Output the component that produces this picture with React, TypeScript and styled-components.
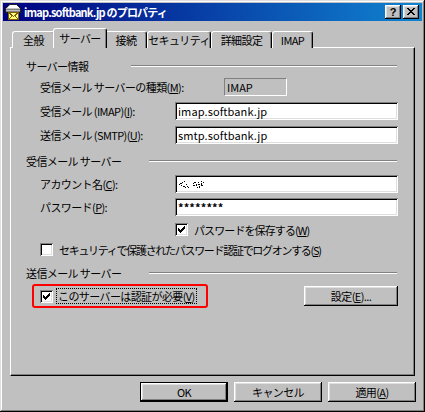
import React, { FC } from 'react';
import styled, { createGlobalStyle } from 'styled-components';

const GlobalStyle = createGlobalStyle`
  html, body {
    margin: 0;
    padding: 0;
    background: #c0c0c0;
  }
  body {
    font-family: "Noto Sans CJK JP", "Liberation Sans", sans-serif;
    font-size: 11px;
    letter-spacing: -0.6px;
    color: #000;
  }
`;

const raised = `
  box-shadow: inset -1px -1px #000, inset 1px 1px #fff,
    inset -2px -2px #808080, inset 2px 2px #dfdfdf;
`;

const sunken = `
  box-shadow: inset 1px 1px #808080, inset -1px -1px #fff,
    inset 2px 2px #000, inset -2px -2px #dfdfdf;
`;

const tabs = [
  { label: '全般', w: 43 },
  { label: 'サーバー', w: 54, active: true },
  { label: '接続', w: 42 },
  { label: 'セキュリティ', w: 64 },
  { label: '詳細設定', w: 61 },
  { label: 'IMAP', w: 41 },
];

const MailIcon: FC = () => (
  <svg width="16" height="16" viewBox="0 0 16 16" shapeRendering="crispEdges">
    <path d="M4.5 0.5h7l4 4v4h-15v-4z" fill="#c0c0c0" stroke="#202020" />
    <path d="M5 1h6l3 3H2z" fill="#ffffff" />
    <rect x="1" y="5" width="14" height="1" fill="#808080" />
    <rect x="1" y="7" width="14" height="1" fill="#808080" />
    <rect x="3.5" y="8.5" width="10" height="7" fill="#ffff80" stroke="#806000" />
    <path d="M3.5 8.5l5 4 5-4M3.5 15.5l3.5-3.5M13.5 15.5l-3.5-3.5" fill="none" stroke="#806000" />
  </svg>
);

const CloseGlyph: FC = () => (
  <svg width="8" height="7" viewBox="0 0 8 7" shapeRendering="crispEdges">
    <path d="M0 0h2v1h1v1h2V1h1V0h2v1H7v1H6v1H5v1h1v1h1v1h1v1H6V6H5V5H3v1H2v1H0V6h1V5h1V4h1V3H2V2H1V1H0z" fill="#000" />
  </svg>
);

const CheckGlyph: FC = () => (
  <svg width="7" height="7" viewBox="0 0 7 7" shapeRendering="crispEdges">
    <path d="M6 0h1v3H6v1H5v1H4v1H3v1H2V6H1V5H0V2h1v1h1v1h1V3h1V2h1V1h1z" fill="#000" />
  </svg>
);

const Check: FC<{ checked?: boolean }> = ({ checked }) => (
  <CheckBox>{checked && <CheckGlyph />}</CheckBox>
);

const App: FC = () => {
  return (
    <>
      <GlobalStyle />
      <Window>
        <TitleBar>
          <MailIcon />
          <Title>imap.softbank.jp のプロパティ</Title>
          <TitleButtons>
            <TitleButton>?</TitleButton>
            <TitleButton>
              <CloseGlyph />
            </TitleButton>
          </TitleButtons>
        </TitleBar>

        <TabStrip>
          {tabs.map((t) => (
            <Tab key={t.label} $w={t.w} $active={t.active}>
              {t.label}
            </Tab>
          ))}
        </TabStrip>

        <Panel>
          <GroupHeader $labelWidth={105} $mt={0}>
            <span>サーバー情報</span>
            <Etch />
          </GroupHeader>
          <FieldRow $mt={5}>
            <span>
              受信メール サーバーの種類(<u>M</u>):
            </span>
            <StaticField>IMAP</StaticField>
          </FieldRow>
          <FieldRow $mt={6}>
            <span>
              受信メール (IMAP)(<u>I</u>):
            </span>
            <TextBox>imap.softbank.jp</TextBox>
          </FieldRow>
          <FieldRow $mt={6}>
            <span>
              送信メール (SMTP)(<u>U</u>):
            </span>
            <TextBox>smtp.softbank.jp</TextBox>
          </FieldRow>

          <GroupHeader $labelWidth={123} $mt={10}>
            <span>受信メール サーバー</span>
            <Etch />
          </GroupHeader>
          <FieldRow $mt={7}>
            <span>
              アカウント名(<u>C</u>):
            </span>
            <TextBox>
              {/* 伏せ字にしたアカウント名 */}
              <svg width="30" height="11" viewBox="0 0 30 11" shapeRendering="crispEdges">
                <path
                  d="M1 5h1v1H1zM2 4h2v1H2zM3 6h1v1H3zM4 3h1v1H4zM6 2h1v1H6zM5 7h2v1H5zM8 5h1v1H8zM7 8h1v1H7zM9 7h1v1H9zM10 8h1v1h-1zM15 4h1v1h-1zM16 3h2v1h-2zM15 6h2v1h-2zM18 5h1v2h-1zM20 3h1v1h-1zM20 5h2v1h-2zM21 7h1v2h-1zM23 2h1v1h-1zM23 4h1v3h-1zM19 8h1v1h-1zM25 3h1v1h-1zM24 6h1v1h-1z"
                  fill="#000"
                />
              </svg>
            </TextBox>
          </FieldRow>
          <FieldRow $mt={5}>
            <span>
              パスワード(<u>P</u>):
            </span>
            <TextBox $bold>********</TextBox>
          </FieldRow>
          <FieldRow $mt={7} $h={13}>
            <span />
            <CheckRow>
              <Check checked />
              <Label $spacing={-0.9}>
                パスワードを保存する(<u>W</u>)
              </Label>
            </CheckRow>
          </FieldRow>
          <CheckRow $indent={14} $mt={7}>
            <Check />
            <Label $spacing={-1.3}>
              セキュリティで保護されたパスワード認証でログオンする(<u>S</u>)
            </Label>
          </CheckRow>

          <GroupHeader $labelWidth={123} $mt={10}>
            <span>送信メール サーバー</span>
            <Etch />
          </GroupHeader>
          <AuthRow>
            <Highlight>
              <Check checked />
              <FocusLabel>
                このサーバーは認証が必要(<u>V</u>)
              </FocusLabel>
            </Highlight>
            <PushButton $w={94}>
              設定(<u>E</u>)...
            </PushButton>
          </AuthRow>
        </Panel>

        <ButtonRow>
          <PushButton $w={88} $default>
            OK
          </PushButton>
          <PushButton $w={88}>キャンセル</PushButton>
          <PushButton $w={88}>
            適用(<u>A</u>)
          </PushButton>
        </ButtonRow>
      </Window>
    </>
  );
};

const Window = styled.div`
  width: 425px;
  height: 412px;
  box-sizing: border-box;
  padding: 3px;
  background: #c0c0c0;
  box-shadow: inset -1px -1px #000, inset 1px 1px #dfdfdf,
    inset -2px -2px #808080, inset 2px 2px #fff;
  display: flex;
  flex-direction: column;
`;

const TitleBar = styled.div`
  height: 18px;
  display: flex;
  align-items: center;
  padding: 0 3px 0 2px;
  background: linear-gradient(to right, #000080, #1084d0);
  color: #fff;
`;

const Title = styled.div`
  margin-left: 3px;
  font-weight: bold;
  font-size: 11px;
  letter-spacing: -0.8px;
  line-height: 18px;
  white-space: nowrap;
`;

const TitleButtons = styled.div`
  margin-left: auto;
  display: flex;
  gap: 2px;
`;

const TitleButton = styled.div`
  width: 16px;
  height: 14px;
  box-sizing: border-box;
  background: #c0c0c0;
  ${raised}
  display: flex;
  align-items: center;
  justify-content: center;
  color: #000;
  font-family: "Liberation Sans", sans-serif;
  font-weight: bold;
  font-size: 11px;
  letter-spacing: 0;
  line-height: 14px;
  padding-bottom: 1px;
`;

const TabStrip = styled.div`
  margin: 7px 0 -1px 0;
  padding-left: 9px;
  height: 20px;
  display: flex;
  align-items: flex-end;
  position: relative;
  z-index: 1;
`;

const Tab = styled.div<{ $w: number; $active?: boolean }>`
  flex: none;
  width: ${({ $w }) => $w}px;
  height: ${({ $active }) => ($active ? 20 : 17)}px;
  margin: ${({ $active }) => ($active ? '0 -2px' : '0')};
  box-sizing: border-box;
  background: #c0c0c0;
  border-top: 1px solid #fff;
  border-left: 1px solid #fff;
  border-right: 1px solid #000;
  border-radius: 3px 3px 0 0;
  box-shadow: inset -1px 0 #808080;
  display: flex;
  align-items: center;
  justify-content: center;
  line-height: 14px;
  white-space: nowrap;
  padding-bottom: ${({ $active }) => ($active ? 2 : 0)}px;
  position: relative;
  z-index: ${({ $active }) => ($active ? 2 : 0)};
`;

const Panel = styled.div`
  margin: 0 7px;
  height: 329px;
  box-sizing: border-box;
  border-top: 1px solid #fff;
  border-left: 1px solid #fff;
  border-right: 1px solid #000;
  border-bottom: 1px solid #000;
  box-shadow: inset -1px -1px #808080;
  padding: 11px 16px 0 15px;
  display: flex;
  flex-direction: column;
`;

const GroupHeader = styled.div<{ $labelWidth: number; $mt: number }>`
  display: grid;
  grid-template-columns: ${({ $labelWidth }) => $labelWidth}px 1fr;
  align-items: center;
  height: 14px;
  margin-top: ${({ $mt }) => $mt}px;
  line-height: 14px;
  white-space: nowrap;
`;

const Etch = styled.div`
  border-top: 1px solid #808080;
  border-bottom: 1px solid #fff;
  margin-right: 1px;
`;

const FieldRow = styled.div<{ $mt: number; $h?: number }>`
  display: grid;
  grid-template-columns: 135px 1fr;
  align-items: center;
  height: ${({ $h }) => $h ?? 18}px;
  margin: ${({ $mt }) => $mt}px 0 0 14px;
  line-height: 14px;
  white-space: nowrap;
`;

const StaticField = styled.div`
  width: 63px;
  height: 18px;
  margin-left: 49px;
  box-sizing: border-box;
  border-top: 1px solid #808080;
  border-left: 1px solid #808080;
  border-right: 1px solid #fff;
  border-bottom: 1px solid #fff;
  padding-left: 2px;
  line-height: 16px;
  letter-spacing: 0;
`;

const TextBox = styled.div<{ $bold?: boolean }>`
  height: 18px;
  box-sizing: border-box;
  background: #fff;
  ${sunken}
  padding: 0 3px;
  display: flex;
  align-items: center;
  font-weight: ${({ $bold }) => ($bold ? 'bold' : 'normal')};
  letter-spacing: 0.1px;
  line-height: 14px;
`;

const CheckBox = styled.span`
  flex: none;
  width: 13px;
  height: 13px;
  box-sizing: border-box;
  background: #fff;
  ${sunken}
  display: inline-flex;
  align-items: center;
  justify-content: center;
`;

const CheckRow = styled.div<{ $indent?: number; $mt?: number }>`
  display: flex;
  align-items: center;
  gap: 6px;
  height: 13px;
  margin: ${({ $mt }) => $mt ?? 0}px 0 0 ${({ $indent }) => $indent ?? 0}px;
  line-height: 14px;
  white-space: nowrap;
`;

const Label = styled.span<{ $spacing: number }>`
  letter-spacing: ${({ $spacing }) => $spacing}px;
`;

const AuthRow = styled.div`
  margin-top: 4px;
  display: flex;
  align-items: center;
  justify-content: space-between;
`;

const Highlight = styled.div`
  margin-left: 6px;
  width: 176px;
  height: 24px;
  box-sizing: border-box;
  border: 2px solid #ff0000;
  border-radius: 3px;
  padding-left: 6px;
  display: flex;
  align-items: center;
  gap: 4px;
  white-space: nowrap;
`;

const FocusLabel = styled.span`
  outline: 1px dotted #000;
  padding: 0 1px;
  line-height: 14px;
`;

const PushButton = styled.div<{ $w: number; $default?: boolean }>`
  width: ${({ $w }) => $w}px;
  height: 20px;
  box-sizing: border-box;
  background: #c0c0c0;
  ${({ $default }) =>
    $default
      ? `border: 1px solid #000;
         box-shadow: inset -1px -1px #000, inset 1px 1px #fff,
           inset -2px -2px #808080, inset 2px 2px #dfdfdf;`
      : raised}
  display: flex;
  align-items: center;
  justify-content: center;
  line-height: 14px;
  white-space: nowrap;
`;

const ButtonRow = styled.div`
  margin-top: 6px;
  padding-right: 6px;
  display: flex;
  justify-content: flex-end;
  gap: 6px;
`;

export default App;
